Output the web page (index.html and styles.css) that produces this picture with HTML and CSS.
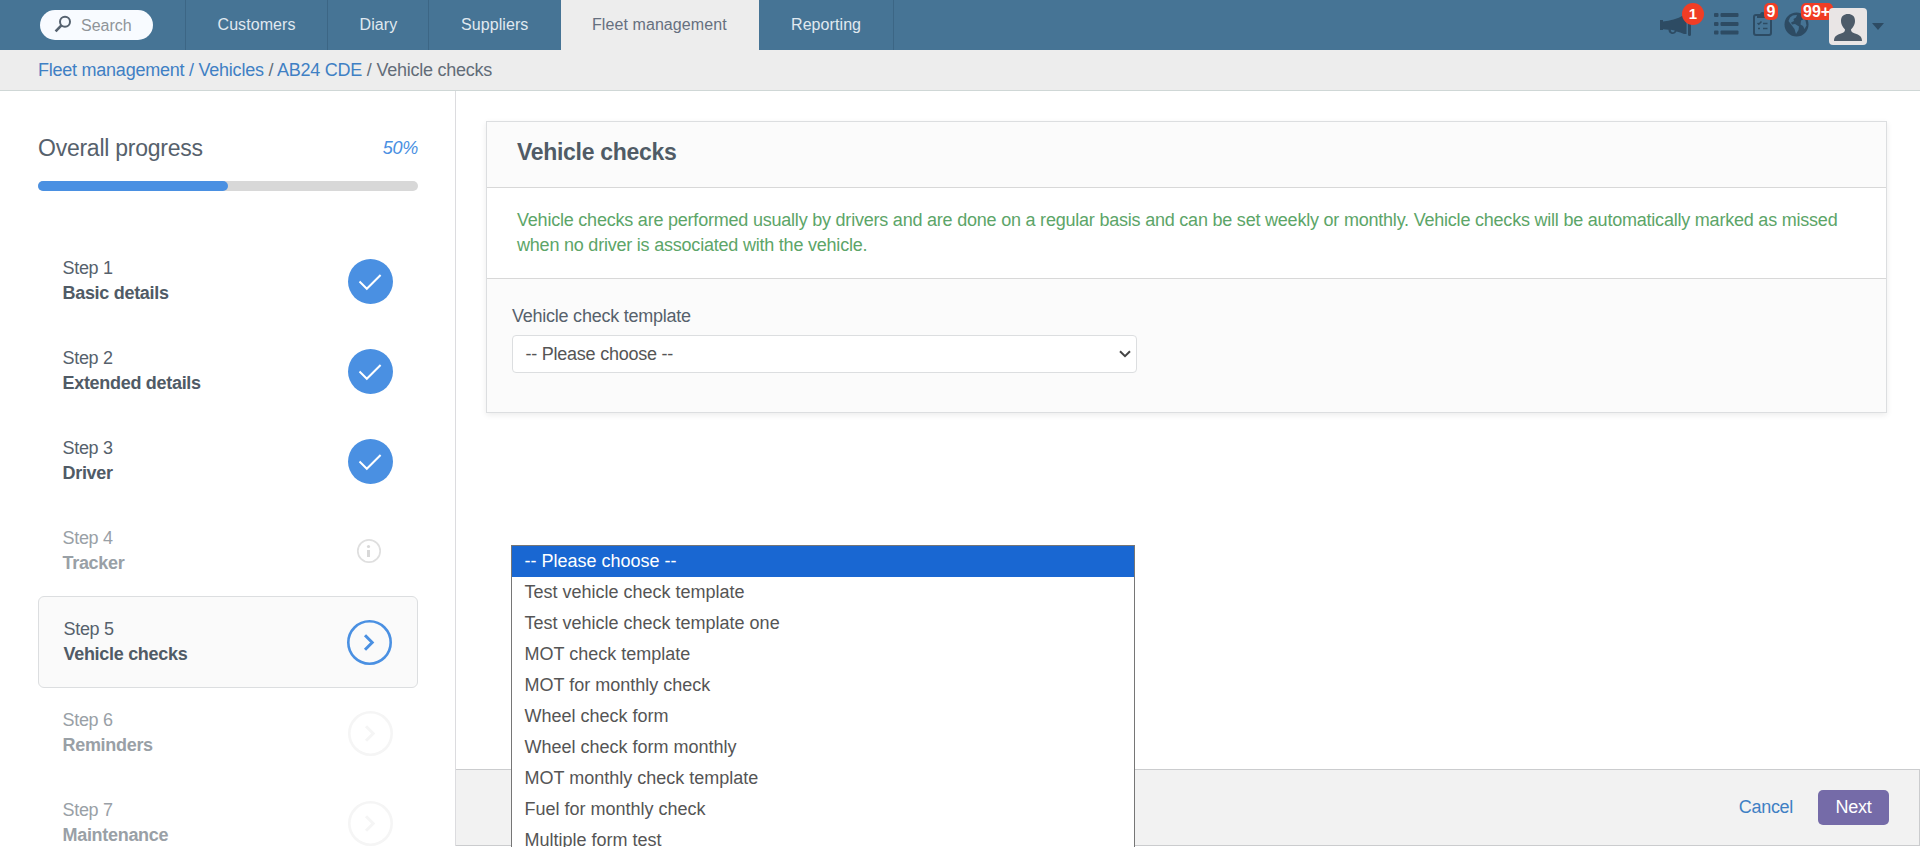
FILE: index.html
```html
<!DOCTYPE html>
<html lang="en">
<head>
<meta charset="utf-8">
<title>Vehicle checks</title>
<link rel="stylesheet" href="styles.css">
</head>
<body>
<header class="topbar">
  <div class="search">
    <svg class="search-icon" width="18" height="18" viewBox="0 0 18 18"><circle cx="11" cy="6.700" r="5" fill="none" stroke="#56626f" stroke-width="2"/><path d="M7.400 10.400 1.600 16.400" stroke="#56626f" stroke-width="2.600"/></svg>
    <span>Search</span>
  </div>
  <nav class="nav">
    <a class="customers">Customers</a>
    <a class="diary">Diary</a>
    <a class="suppliers">Suppliers</a>
    <a class="fleet active">Fleet management</a>
    <a class="reporting">Reporting</a>
  </nav>
  <div class="tools">
    <div class="tool horn">
      <svg width="33" height="24" viewBox="0 0 33 24"><path d="M0 6h3v1.500C10 7 17 5 24 1v19c-2.500-1.200-5-2-7.500-2.400A4.200 4.200 0 0 1 8.500 15.800L3 15.200V16H0z" fill="#2d4b63"/><path d="M10.800 15.800l4 .800a2 2 0 0 1-4-.800z" fill="#467495"/><path d="M28 2h3v18.500a1.500 1.500 0 0 1-3 0zM24 2h2.500v18H24z" fill="#2d4b63"/></svg>
      <b class="badge round">1</b>
    </div>
    <div class="tool list">
      <svg width="25" height="22" viewBox="0 0 25 22"><g fill="#2d4b63"><rect width="4.500" height="4" rx="1"/><rect x="6.500" width="18" height="4" rx="1"/><rect y="9" width="4.500" height="4" rx="1"/><rect x="6.500" y="9" width="18" height="4" rx="1"/><rect y="17.500" width="4.500" height="4" rx="1"/><rect x="6.500" y="17.500" width="18" height="4" rx="1"/></g></svg>
    </div>
    <div class="tool clip">
      <svg width="19" height="25" viewBox="0 0 19 25"><g fill="none" stroke="#2d4b63"><rect x="1" y="4" width="17" height="20" rx="2" stroke-width="2"/><path d="M4.500 12l1.300 1.300L8.500 10.500M10 12.500h4.500M10 17.500h4.500M5 17.500h2" stroke-width="1.500"/></g><path d="M4 7V3h3a2.600 2.600 0 0 1 5 0h3v4z" fill="#2d4b63"/></svg>
      <b class="badge">9</b>
    </div>
    <div class="tool globe">
      <svg width="25" height="25" viewBox="0 0 25 25"><circle cx="12.500" cy="12.500" r="12" fill="#2d4b63"/><path d="M6 5.500C8 3.500 10 2.800 13 3l-1 2.500L9.500 7 10 9 7 10.500l1 2 3-.5 4 2.500-.500 3.500-2.500 4-1.500-5-3-4L4.500 9zM18 4.500l3.500 4 1 5-2 3.500-1.500-3-2.500-1.500.5-4 2-1z" fill="#467495"/></svg>
      <b class="badge">99+</b>
    </div>
    <div class="avatar">
      <svg width="38" height="37" viewBox="0 0 38 37"><path d="M5 33c0-5 3-6 7-7.500 3-1 4-2 4-4-3-3-4-6-4-8.500C12 8 15 6 19 6s7 2 7 7c0 2.500-1 5.500-4 8.500 0 2 1 3 4 4 4 1.500 7 2.500 7 7.500z" fill="#4d5b69"/></svg>
    </div>
    <i class="caret"></i>
  </div>
</header>
<div class="crumbs"><a>Fleet management</a> <a>/</a> <a>Vehicles</a> / <a>AB24 CDE</a> / Vehicle checks</div>
<main class="layout">
  <aside class="sidebar">
    <div class="progress-head"><h2>Overall progress</h2><em>50%</em></div>
    <div class="track"><div class="fill"></div></div>
    <ol class="steps">
      <li class="step"><div>Step 1<strong>Basic details</strong></div><svg class="ring" viewBox="0 0 45 45"><circle cx="22.500" cy="22.500" r="22.500" fill="#4a90e2"/><path d="M11.500 22.500l7.300 7.300L32.600 16" fill="none" stroke="#fff" stroke-width="2"/></svg></li>
      <li class="step"><div>Step 2<strong>Extended details</strong></div><svg class="ring" viewBox="0 0 45 45"><circle cx="22.500" cy="22.500" r="22.500" fill="#4a90e2"/><path d="M11.500 22.500l7.300 7.300L32.600 16" fill="none" stroke="#fff" stroke-width="2"/></svg></li>
      <li class="step"><div>Step 3<strong>Driver</strong></div><svg class="ring" viewBox="0 0 45 45"><circle cx="22.500" cy="22.500" r="22.500" fill="#4a90e2"/><path d="M11.500 22.500l7.300 7.300L32.600 16" fill="none" stroke="#fff" stroke-width="2"/></svg></li>
      <li class="step muted"><div>Step 4<strong>Tracker</strong></div><svg class="ring" viewBox="0 0 45 45"><circle cx="21" cy="22" r="11.200" fill="none" stroke="#dfdfdf" stroke-width="1.700"/><circle cx="20.500" cy="17.500" r="1.600" fill="#d8d8d8"/><path d="M20.500 21v7" stroke="#d8d8d8" stroke-width="3"/></svg></li>
      <li class="step current"><div>Step 5<strong>Vehicle checks</strong></div><svg class="ring" viewBox="0 0 45 45"><g fill="none" stroke="#4a90e2"><circle cx="22.500" cy="22.500" r="21.200" stroke-width="2.600"/><path d="M18 15.200l7.200 7.300-7.200 7.300" stroke-width="3"/></g></svg></li>
      <li class="step muted"><div>Step 6<strong>Reminders</strong></div><svg class="ring" viewBox="0 0 45 45"><g fill="none" stroke="#f5f5f5"><circle cx="22.500" cy="22.500" r="21.200" stroke-width="2.600"/><path d="M18 15.200l7.200 7.300-7.200 7.300" stroke-width="3"/></g></svg></li>
      <li class="step muted"><div>Step 7<strong>Maintenance</strong></div><svg class="ring" viewBox="0 0 45 45"><g fill="none" stroke="#f5f5f5"><circle cx="22.500" cy="22.500" r="21.200" stroke-width="2.600"/><path d="M18 15.200l7.200 7.300-7.200 7.300" stroke-width="3"/></g></svg></li>
    </ol>
  </aside>
  <section class="content">
    <div class="panel">
      <h1>Vehicle checks</h1>
      <p class="note">Vehicle checks are performed usually by drivers and are done on a regular basis and can be set weekly or monthly. Vehicle checks will be automatically marked as missed when no driver is associated with the vehicle.</p>
      <div class="field">
        <label>Vehicle check template</label>
        <div class="select"><span>-- Please choose --</span>
          <svg width="12" height="8" viewBox="0 0 12 8"><path d="M1 1.200l5 5 5-5" fill="none" stroke="#444" stroke-width="2"/></svg>
          <ul class="menu">
            <li class="on">-- Please choose --</li>
            <li>Test vehicle check template</li>
            <li>Test vehicle check template one</li>
            <li>MOT check template</li>
            <li>MOT for monthly check</li>
            <li>Wheel check form</li>
            <li>Wheel check form monthly</li>
            <li>MOT monthly check template</li>
            <li>Fuel for monthly check</li>
            <li>Multiple form test</li>
          </ul>
        </div>
      </div>
    </div>
    <footer class="actions"><a>Cancel</a><button>Next</button></footer>
  </section>
</main>
</body>
</html>
```
FILE: styles.css
```css
* { box-sizing: border-box; }
html, body { height: 847px; overflow: hidden; }
body {
  margin: 0;
  display: flex;
  flex-direction: column;
  background: #fff;
  color: #56616c;
  font: 18px/25px "Liberation Sans", Arial, sans-serif;
  letter-spacing: -0.3px;
}
h1, h2, p, ol, ul { margin: 0; padding: 0; list-style: none; }
svg { display: block; }

.topbar { display: flex; flex: none; height: 50px; background: #467495; letter-spacing: 0; font-size: 16px; }
.search {
  display: flex; align-items: center; gap: 9px;
  width: 113px; height: 30px; margin: 10px 32px 0 40px; padding-left: 14px;
  border-radius: 15px; background: #f8fbff; color: #8f9499;
}
.search-icon { margin-top: -3px; }
.search span { padding-top: 1px; }
.nav { display: flex; border-left: 1px solid #3c6685; }
.nav a { border-right: 1px solid #3c6685; padding-left: 31.5px; line-height: 50px; letter-spacing: 0.08px; color: #e0e9f0; }
.nav .customers { width: 142px; }
.nav .diary { width: 101px; }
.nav .suppliers { width: 132px; padding-left: 32px; border-right: 0; }
.nav .fleet { width: 198px; padding-left: 31px; background: #ededed; color: #66707f; border-right: 0; }
.nav .reporting { width: 135px; padding-left: 32px; }
.tools { display: flex; margin-left: auto; padding-right: 36px; }
.tool { position: relative; }
.horn { width: 54px; padding-top: 14px; }
.list { width: 39px; padding-top: 13px; }
.clip { width: 31px; padding-top: 11px; }
.globe { width: 45px; padding-top: 12px; }
.badge {
  position: absolute; top: 3px; left: 11px; height: 17px; padding: 0 2.5px;
  border-radius: 5px; background: #f03d25; color: #fff; font-size: 16px; line-height: 17px;
}
.globe .badge { left: 16.5px; }
.badge.round { left: 22px; width: 22px; height: 22px; padding: 0; border-radius: 50%; font-size: 15px; line-height: 21px; text-align: center; }
.avatar { width: 38px; height: 37px; margin-top: 8px; border-radius: 4px; background: #e9e5e5; position: relative; }
.caret { margin: 23px 0 0 5px; width: 12px; height: 7px; background: #2d4b63; clip-path: polygon(0 0, 100% 0, 50% 100%); }

.crumbs { flex: none; height: 41px; padding: 8px 38px 0; background: #ededed; border-bottom: 1px solid #cfd7d6; color: #626c78; letter-spacing: -0.24px; }
.crumbs a { color: #3f80c4; }

.layout { display: flex; flex: none; height: 755px; }
.sidebar { width: 456px; padding: 44px 37px 0 38px; border-right: 1px solid #dcdcdf; overflow: hidden; }
.progress-head { display: flex; justify-content: space-between; align-items: center; height: 26px; }
.progress-head h2 { font-size: 23px; font-weight: normal; letter-spacing: -0.25px; }
.progress-head em { color: #4a90e2; }
.track { height: 10px; margin-top: 20px; border-radius: 5px; background: #d8d8d8; }
.fill { width: 50%; height: 10px; border-radius: 5px; background: #4a90e2; }
.steps { margin-top: 45px; }
.step { display: flex; align-items: center; justify-content: space-between; height: 90px; padding: 0 25px 0 24.5px; }
.step strong { display: block; color: #505b66; }
.muted, .muted strong { color: #99a0a6; }
.current { height: 92px; border: 1px solid #dcdee0; border-radius: 6px; background: #fafafa; }
.ring { width: 45px; height: 45px; }

.content { display: flex; flex: 1; flex-direction: column; justify-content: space-between; padding-top: 30px; }
.panel { width: 1401px; height: 292px; margin-left: 30px; border: 1px solid #dcdee0; background: #fbfbfb; box-shadow: 0 2px 6px rgba(0, 0, 0, .08); }
.panel h1 { height: 66px; padding: 18px 30px 0; border-bottom: 1px solid #d8d8d8; color: #505b66; font-size: 23px; }
.note { height: 91px; padding: 20px 30px 0; border-bottom: 1px solid #d8d8d8; background: #fff; color: #5ca568; letter-spacing: -0.215px; }
.field { padding: 25px; letter-spacing: -0.24px; }
.field label { display: block; height: 31px; }
.select {
  position: relative; display: flex; align-items: center; justify-content: space-between;
  width: 625px; height: 38px; padding: 0 5px 0 12.5px; border: 1px solid #dcdee0; border-radius: 4px; background: #fff; color: #555;
}
.menu {
  position: absolute; left: -2px; top: 209px; width: 624px; height: 312px;
  border: 1px solid #767676; background: #fff; letter-spacing: 0; z-index: 2;
}
.menu li { height: 31px; padding-left: 12.5px; line-height: 31px; }
.menu .on { background: #1967d2; color: #fff; }
.actions {
  display: flex; justify-content: flex-end; align-items: center; gap: 25px; height: 77px; padding-right: 30px;
  border: 1px solid #cbccce; border-left: 0; background: #f2f2f2;
}
.actions a { color: #3f80c4; }
.actions button { width: 71px; height: 35px; padding: 0; border: 0; border-radius: 5px; background: #756ba8; color: #fff; font: inherit; letter-spacing: inherit; }
```
